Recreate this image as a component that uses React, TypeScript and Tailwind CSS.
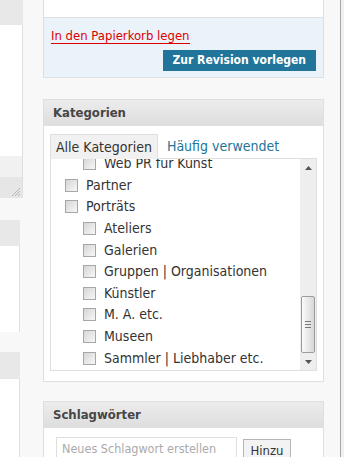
const font = "font-['DejaVu_Sans_Condensed','DejaVu_Sans',sans-serif]"

const cats = [
  { label: 'Web PR für Kunst', level: 1 },
  { label: 'Partner', level: 0 },
  { label: 'Porträts', level: 0 },
  { label: 'Ateliers', level: 1 },
  { label: 'Galerien', level: 1 },
  { label: 'Gruppen | Organisationen', level: 1 },
  { label: 'Künstler', level: 1 },
  { label: 'M. A. etc.', level: 1 },
  { label: 'Museen', level: 1 },
  { label: 'Sammler | Liebhaber etc.', level: 1 },
]

const Checkbox = () => (
  <span className="block w-[13px] h-[13px] shrink-0 border border-[#a7a7a7] bg-linear-to-br from-[#d6d6d6] to-[#f7f7f7]" />
)

const BoxHeader = ({ title }: { title: string }) => (
  <div className="h-[26px] flex items-center px-[9px] bg-linear-to-b from-[#ececec] to-[#dedede] border-b border-[#dfdfdf]">
    <span className="text-[13px] font-bold text-[#464646]">{title}</span>
  </div>
)

export default function App() {
  return (
    <div className={`w-[344px] h-[457px] overflow-hidden flex bg-[#f8f8f8] text-[#333] ${font}`}>
      {/* linke spalte, abgeschnitten */}
      <div className="w-[23px] shrink-0 flex flex-col">
        <div className="h-[26px] bg-[#e8e8e8]" />
        <div className="h-[134px] bg-white border-r border-[#dfdfdf]" />
        <div className="h-[22px] bg-[#f1f1f1] border-r border-[#dfdfdf]" />
        <div className="h-[21px] bg-[#e6e6e6] border-r border-[#dfdfdf] flex items-end justify-end pr-[1px] pb-[1px]">
          <svg width="12" height="12" viewBox="0 0 12 12">
            <path d="M11 3 L3 11 M11 6 L6 11 M11 9 L9 11" stroke="#b5b5b5" strokeWidth="1" />
          </svg>
        </div>
        <div className="w-[20px] mt-[22px] h-[27px] bg-[#e8e8e8]" />
        <div className="w-[20px] h-[88px] bg-white border-r border-[#dfdfdf]" />
        <div className="w-[20px] mt-[20px] h-[28px] bg-[#e8e8e8]" />
        <div className="w-[20px] h-[80px] bg-white border-r border-[#dfdfdf]" />
      </div>

      {/* sidebar */}
      <div className="w-[281px] ml-[20px] shrink-0 flex flex-col">
        <div className="border-x border-b border-[#dfdfdf]">
          <div className="h-[17px] bg-white" />
          <div className="border-t border-[#dfdfdf] bg-[#eaf2fa] pt-[10px] pb-[6px] px-[7px]">
            <div className="flex">
              <span className="block text-[13px] leading-[15px] text-[#d00] border-b border-[#d00]">
                In den Papierkorb legen
              </span>
            </div>
            <div className="mt-[6px] flex justify-end">
              <button className="block h-[21px] px-[10px] bg-[#21759b] text-white text-[12px] font-bold leading-[21px]">
                Zur Revision vorlegen
              </button>
            </div>
          </div>
        </div>

        <div className="mt-[21px] border border-[#dfdfdf] bg-white">
          <BoxHeader title="Kategorien" />
          <div className="pt-[8px] pb-[10px] px-[6px]">
            <div className="flex items-end">
              <div className="relative z-10 -mb-px h-[25px] px-[5px] flex items-center bg-[#f1f1f1] border border-b-0 border-[#dfdfdf] text-[14px]">
                Alle Kategorien
              </div>
              <span className="ml-[9px] h-[24px] flex items-center text-[14px] text-[#21759b]">Häufig verwendet</span>
            </div>
            <div className="h-[213px] border border-[#dfdfdf] flex">
              <div className="flex-1 overflow-hidden">
                <div className="-mt-[6px]">
                  {cats.map(c => (
                    <div
                      key={c.label}
                      className={`h-[21.6px] flex items-center gap-[8px] text-[14px] ${c.level ? 'pl-[32px]' : 'pl-[14px]'}`}
                    >
                      <Checkbox />
                      <span className="whitespace-nowrap">{c.label}</span>
                    </div>
                  ))}
                </div>
              </div>
              <div className="w-[16px] flex flex-col bg-[#eeeeee]">
                <div className="h-[17px] flex items-center justify-center">
                  <svg width="7" height="4" viewBox="0 0 7 4"><path d="M0 4 L3.5 0 L7 4 Z" fill="#555" /></svg>
                </div>
                <div className="flex-1 flex flex-col justify-end">
                  <div className="h-[57px] mx-[1px] rounded-[2px] border border-[#9c9c9c] bg-linear-to-r from-[#fafafa] to-[#d8d8d8] flex flex-col items-center justify-center gap-[2px]">
                    <span className="block w-[6px] h-px bg-[#777]" />
                    <span className="block w-[6px] h-px bg-[#777]" />
                    <span className="block w-[6px] h-px bg-[#777]" />
                  </div>
                </div>
                <div className="h-[17px] flex items-center justify-center">
                  <svg width="7" height="4" viewBox="0 0 7 4"><path d="M0 0 L7 0 L3.5 4 Z" fill="#555" /></svg>
                </div>
              </div>
            </div>
          </div>
        </div>

        <div className="mt-[19px] border border-[#dfdfdf] bg-white">
          <BoxHeader title="Schlagwörter" />
          <div className="pt-[9px] pl-[12px] flex items-start gap-[6px]">
            <div className="w-[181px] h-[25px] border border-[#dfdfdf] bg-white flex items-center px-[5px] text-[12.5px] text-[#aaa] whitespace-nowrap overflow-hidden">
              Neues Schlagwort erstellen
            </div>
            <button className="mt-[2px] w-[48px] h-[23px] border border-[#b5b5b5] bg-[#f3f3f3] text-[13px] text-[#333]">
              Hinzu
            </button>
          </div>
        </div>
      </div>

      {/* rand rechts */}
      <div className="ml-[16px] w-px bg-[#a8a8a8] shrink-0" />
      <div className="flex-1 bg-[#f0f0f0]" />
    </div>
  )
}
